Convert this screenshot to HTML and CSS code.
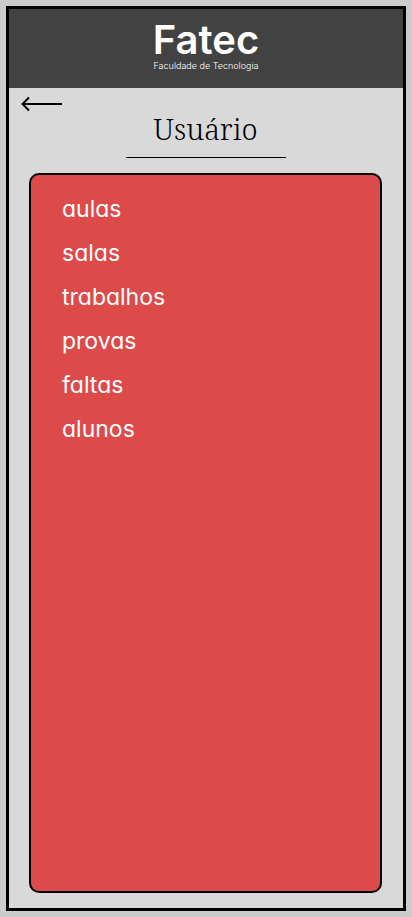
FILE: index.html
```html
<!DOCTYPE html>
<html lang="pt-BR">
<head>
<meta charset="utf-8">
<meta name="viewport" content="width=device-width, initial-scale=1">
<title>Usuário</title>
<link rel="stylesheet" href="styles.css">
</head>
<body>
<div class="frame">
  <header class="header">
    <div class="brand">Fatec</div>
    <div class="tagline">Faculdade de Tecnologia</div>
  </header>
  <main class="content">
    <button class="back" type="button" aria-label="Voltar">
      <svg width="42" height="16" viewBox="0 0 42 16" fill="none" stroke="currentColor" stroke-width="2"><path d="M42 8H2"/><path d="M9 1.5 2.5 8 9 14.5"/></svg>
    </button>
    <h1 class="title">Usuário</h1>
    <nav class="panel">
      <a class="item" href="#aulas">aulas</a>
      <a class="item" href="#salas">salas</a>
      <a class="item" href="#trabalhos">trabalhos</a>
      <a class="item" href="#provas">provas</a>
      <a class="item" href="#faltas">faltas</a>
      <a class="item" href="#alunos">alunos</a>
    </nav>
  </main>
</div>
</body>
</html>
```
FILE: styles.css
```css
* { box-sizing: border-box; }
body {
  margin: 0;
  padding: 6px;
  min-height: 100vh;
  display: flex;
  background: #cccccc;
}
.frame {
  flex: 1;
  display: flex;
  flex-direction: column;
  border: 3px solid #000;
  background: #d9d9d9;
}
.header {
  padding: 10px 0 17px;
  background: #424242;
  color: #fff;
  text-align: center;
  font-family: Inter, sans-serif;
}
.brand {
  font-size: 40px;
  line-height: 42px;
  font-weight: 600;
}
.tagline {
  font-size: 9px;
  line-height: 10px;
  font-weight: 300;
}
.content {
  flex: 1;
  display: flex;
  flex-direction: column;
  padding: 8px 21px 15px 20px;
}
.back {
  align-self: flex-start;
  display: flex;
  margin-left: -9px;
  padding: 0;
  border: 0;
  background: none;
  color: #000;
}
.title {
  align-self: center;
  width: 160px;
  margin: 0 0 15px;
  padding-bottom: 11px;
  border-bottom: 1px solid #000;
  font: 300 29px/34px "Noto Serif", "DejaVu Serif Condensed", "DejaVu Serif", serif;
  text-align: center;
  color: #000;
}
.panel {
  flex: 1;
  display: flex;
  flex-direction: column;
  padding: 12px 31px;
  border: 2px solid #000;
  border-radius: 10px;
  background: #dc4a4a;
}
.item {
  font: 400 23px/44px Inter, sans-serif;
  font-feature-settings: "cv11";
  color: #fff;
  text-decoration: none;
}
```
